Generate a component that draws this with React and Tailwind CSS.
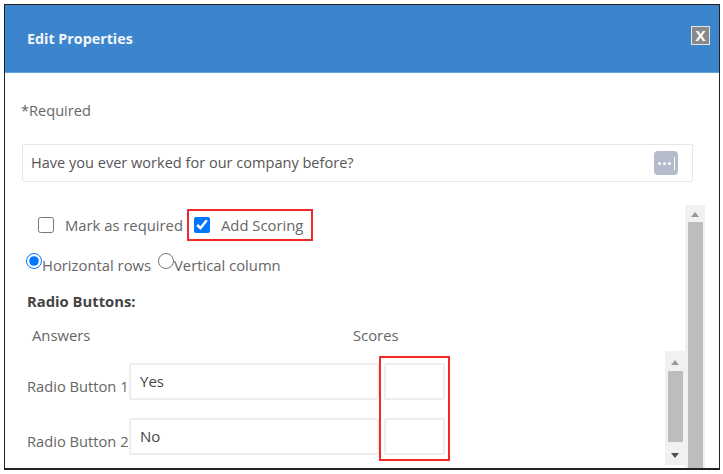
const font = { fontFamily: '"Open Sans", sans-serif' };

function ArrowUp({ color = "#9a9a9a" }) {
  return (
    <svg width="8" height="5" viewBox="0 0 8 5">
      <path d="M4 0L8 5H0Z" fill={color} />
    </svg>
  );
}

function ArrowDown({ color = "#505050" }) {
  return (
    <svg width="8" height="5" viewBox="0 0 8 5">
      <path d="M0 0H8L4 5Z" fill={color} />
    </svg>
  );
}

function AnswerRow({ label, value }) {
  return (
    <div className="flex h-[37px] items-center">
      <span className="mt-[9px] w-[102px] shrink-0 whitespace-nowrap text-[14.7px] text-[#666]">{label}</span>
      <div className="flex h-[37px] w-[250px] items-start rounded-[2px] border-2 border-[#eeeeee] px-[9px] pt-[6px] text-[15px] leading-[20px] text-[#444]">
        {value}
      </div>
    </div>
  );
}

export default function App() {
  return (
    <div className="h-[474px] w-[723px] overflow-hidden bg-white pl-[4px] pt-[4px] text-[#666]" style={font}>
      <div className="flex h-[466px] w-[716px] flex-col overflow-hidden border border-b-2 border-[#222] bg-white">
        <div className="flex h-[68px] shrink-0 items-center justify-between border-b border-[#5da3e4] bg-[#3c85cd] pl-[22px] pr-[9px]">
          <span className="text-[14.3px] font-bold text-[#f2f6fb]">Edit Properties</span>
          <div className="mt-[-7px] flex h-[19px] w-[19px] items-center justify-center border border-[#e6e6e6] bg-[#8a8a8a] text-[15px] font-bold leading-none text-white">
            X
          </div>
        </div>

        <div className="mt-[27px] pl-[16px] text-[14.6px] leading-[20px]">*Required</div>

        <div className="ml-[17px] mt-[24px] flex h-[38px] w-[671px] shrink-0 items-center justify-between rounded-[2px] border border-[#e6e6e6] pl-[8px] pr-[14px] text-[14.55px] text-[#555]">
          <span>Have you ever worked for our company before?</span>
          <div className="flex h-[24px] w-[24px] items-center justify-center gap-[2px] rounded-[4px] bg-[#b4bccb]">
            <span className="h-[3px] w-[3px] rounded-full bg-white" />
            <span className="h-[3px] w-[3px] rounded-full bg-white" />
            <span className="h-[3px] w-[3px] rounded-full bg-white" />
            <span className="ml-[1px] h-[13px] w-[1px] bg-white" />
          </div>
        </div>

        <div className="mt-[23px] flex min-h-0 flex-1">
          <div className="min-w-0 flex-1">
            <div className="mt-[4px] flex h-[32px] items-center pl-[33px]">
              <input type="checkbox" className="m-0 h-[16px] w-[16px]" />
              <span className="ml-[11px] w-[122px] whitespace-nowrap text-[14.8px]">Mark as required</span>
              <div className="flex h-[32px] w-[126px] items-center border-2 border-[#f02a2a] pl-[5px]">
                <input type="checkbox" defaultChecked className="m-0 h-[16px] w-[16px]" />
                <span className="ml-[11px] whitespace-nowrap text-[14.8px]">Add Scoring</span>
              </div>
            </div>

            <div className="mt-[12px] flex h-[22px] items-start pl-[21px] text-[14.8px]">
              <input type="radio" name="layout" defaultChecked className="m-0 h-[16px] w-[16px]" />
              <span className="mt-[1px] w-[116px] whitespace-nowrap">Horizontal rows</span>
              <input type="radio" name="layout" className="m-0 h-[16px] w-[16px]" />
              <span className="mt-[1px] whitespace-nowrap">Vertical column</span>
            </div>

            <div className="mt-[16px] pl-[22px] text-[14.8px] font-bold leading-[20px] text-[#444]">Radio Buttons:</div>

            <div className="relative mt-[14px] flex h-[20px] text-[14.8px] leading-[20px]">
              <span className="w-[348px] pl-[27px]">Answers</span>
              <span>Scores</span>
            </div>

            <div className="mt-[11px] flex">
              <div className="flex-none pl-[22px] pt-[7px]">
                <AnswerRow label="Radio Button 1" value="Yes" />
                <div className="mt-[18px]">
                  <AnswerRow label="Radio Button 2" value="No" />
                </div>
              </div>
              <div className="h-[105px] w-[71px] flex-none border-2 border-[#f02a2a] pl-[3px] pt-[5px]">
                <div className="h-[37px] w-[61px] rounded-[2px] border-2 border-[#eeeeee]" />
                <div className="mt-[18px] h-[37px] w-[61px] rounded-[2px] border-2 border-[#eeeeee]" />
              </div>
              <div className="ml-auto mt-[-5px] flex h-[114px] w-[20px] flex-col items-center bg-[#f1f1f1] pt-[9px]">
                <ArrowUp />
                <div className="mt-[6px] h-[71px] w-[15px] bg-[#bdbdbd]" />
                <div className="mt-[11px]">
                  <ArrowDown />
                </div>
              </div>
            </div>
          </div>

          <div className="flex w-[20px] shrink-0 flex-col items-center bg-[#f1f1f1] pt-[7px]">
            <ArrowUp />
            <div className="mt-[5px] w-[15px] flex-1 bg-[#bdbdbd]" />
          </div>
          <div className="w-[14px] shrink-0" />
        </div>
      </div>
    </div>
  );
}
